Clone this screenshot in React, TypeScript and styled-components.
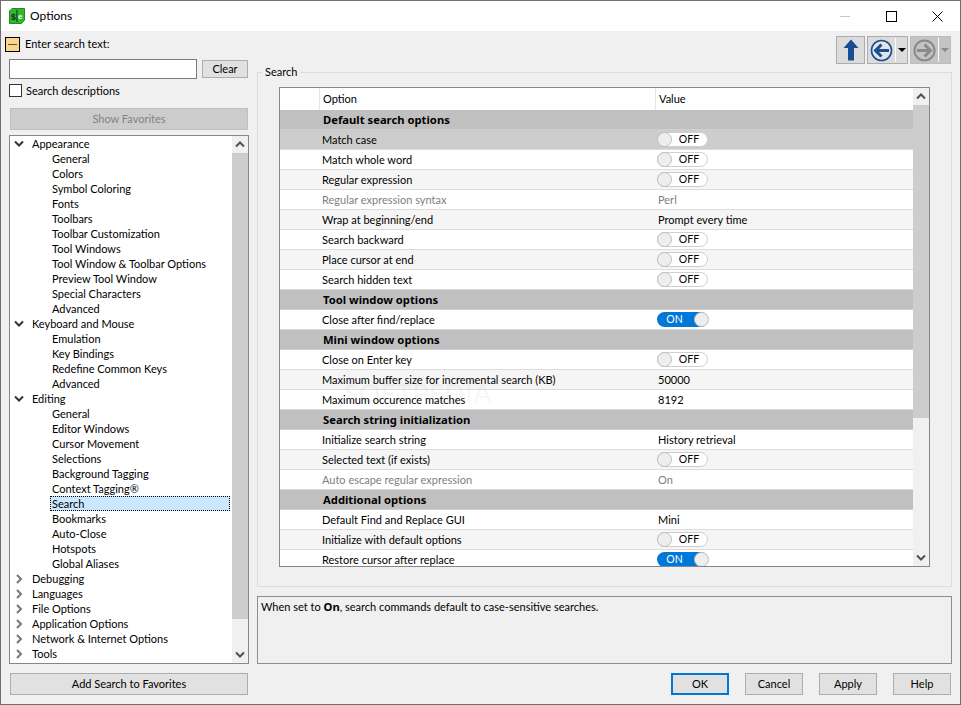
import React from "react";
import styled, { createGlobalStyle } from "styled-components";

const GlobalStyle = createGlobalStyle`
  html, body {
    margin: 0;
    padding: 0;
    background: #f0f0f0;
  }
  body {
    font-family: Lato, "Noto Sans", "Liberation Sans", sans-serif;
    font-size: 11px;
    color: #000;
  }
  b {
    font-family: "Noto Sans", sans-serif;
    font-size: 11.25px;
  }
  * {
    box-sizing: border-box;
  }
`;

const Frame = styled.div`
  width: 961px;
  height: 705px;
  display: flex;
  flex-direction: column;
  border: 1px solid #6f6f6f;
  overflow: hidden;
  background: #f0f0f0;
`;

const TitleBar = styled.div`
  height: 30px;
  flex: none;
  display: flex;
  align-items: center;
  background: #fff;
  padding-left: 8px;
`;

const TitleText = styled.span`
  margin-left: 5px;
  padding-bottom: 2px;
  font-size: 12px;
  flex: 1;
`;

const WinButton = styled.div`
  width: 46px;
  height: 30px;
  display: flex;
  align-items: center;
  justify-content: center;
`;

const Body = styled.div`
  flex: 1;
  display: flex;
  min-height: 0;
`;

const LeftPane = styled.div`
  width: 256px;
  flex: none;
  display: flex;
  flex-direction: column;
  padding: 6px 7px 9px 8px;
`;

const SearchHeading = styled.div`
  display: flex;
  align-items: flex-start;
  gap: 5px;
  height: 15px;
  line-height: 13px;
  margin-left: -4px;
`;

const CollapseBox = styled.div`
  width: 15px;
  height: 15px;
  border: 1px solid #000;
  background: #fbd58c;
  display: flex;
  align-items: center;
  justify-content: center;
  &::after {
    content: "";
    width: 9px;
    height: 1px;
    background: #555;
  }
`;

const SearchRow = styled.div`
  display: flex;
  align-items: center;
  gap: 5px;
  margin-top: 7px;
`;

const SearchInput = styled.input`
  width: 188px;
  height: 20px;
  background: #fff;
  border: 1px solid #7a7a7a;
  outline: none;
  padding: 0 3px;
`;

const Button = styled.div<{ $w?: number; $disabled?: boolean; $focus?: boolean }>`
  width: ${(p) => (p.$w ? p.$w + "px" : "100%")};
  height: 22px;
  flex: none;
  display: flex;
  align-items: center;
  justify-content: center;
  padding-bottom: 2px;
  background: ${(p) => (p.$disabled ? "#cccccc" : "#e1e1e1")};
  color: ${(p) => (p.$disabled ? "#838383" : "#000")};
  border: ${(p) => (p.$focus ? "2px solid #0078d7" : p.$disabled ? "1px solid #bfbfbf" : "1px solid #adadad")};
`;

const ClearButton = styled(Button)`
  height: 18px;
`;

const CheckRow = styled.label`
  display: flex;
  align-items: center;
  gap: 4px;
  margin-top: 5px;
  height: 13px;
`;

const CheckBox = styled.span`
  width: 13px;
  height: 13px;
  background: #fff;
  border: 1px solid #333;
`;

const FavButton = styled(Button)`
  margin: 11px 0 5px 1px;
  width: 238px;
`;

const AddButton = styled(Button)`
  margin: 9px 0 0 1px;
  width: 238px;
`;

const TreeBox = styled.div`
  width: 240px;
  height: 529px;
  flex: none;
  display: flex;
  background: #fff;
  border: 1px solid #828790;
`;

const TreeList = styled.div`
  flex: 1;
  overflow: hidden;
`;

const TreeRow = styled.div<{ $child?: boolean; $selected?: boolean }>`
  height: 15px;
  line-height: 14px;
  display: flex;
  align-items: center;
  white-space: nowrap;
  margin-left: ${(p) => (p.$child ? "40px" : "0")};
  margin-right: ${(p) => (p.$child ? "2px" : "0")};
  padding-left: ${(p) => (p.$child ? "2px" : "4px")};
  ${(p) => p.$selected && "background: #cce8ff; outline: 1px dotted #000; outline-offset: -1px;"}
`;

const Chevron = styled.svg`
  width: 10px;
  height: 10px;
  margin-right: 8px;
  flex: none;
`;

const ScrollBar = styled.div`
  width: 16px;
  flex: none;
  display: flex;
  flex-direction: column;
  background: #f0f0f0;
`;

const ScrollArrow = styled.div`
  height: 17px;
  flex: none;
  display: flex;
  align-items: center;
  justify-content: center;
`;

const ScrollThumb = styled.div<{ $h: number }>`
  height: ${(p) => p.$h}px;
  flex: none;
  background: #cdcdcd;
`;

const ScrollRest = styled.div`
  flex: 1;
`;

const RightPane = styled.div`
  flex: 1;
  min-width: 0;
  display: flex;
  flex-direction: column;
`;

const ToolRow = styled.div`
  height: 34px;
  flex: none;
  display: flex;
  justify-content: flex-end;
  align-items: flex-start;
  gap: 2px;
  padding: 5px 9px 0 0;
`;

const ToolButton = styled.div<{ $w: number; $off?: boolean; $center?: boolean }>`
  width: ${(p) => p.$w}px;
  height: 28px;
  display: flex;
  align-items: center;
  justify-content: ${(p) => (p.$center ? "center" : "flex-start")};
  background: ${(p) => (p.$off ? "#c4c4c4" : "#dcdcdc")};
  border: 1px solid ${(p) => (p.$off ? "#bdbdbd" : "#adadad")};
`;

const ToolSep = styled.span`
  width: 1px;
  height: 24px;
  background: #fff;
  margin: 0 2px 0 2px;
`;

const Caret = styled.span<{ $off?: boolean }>`
  width: 0;
  height: 0;
  border-left: 4px solid transparent;
  border-right: 4px solid transparent;
  border-top: 4px solid ${(p) => (p.$off ? "#8a8a8a" : "#000")};
`;

const Group = styled.fieldset`
  width: 695px;
  height: 522px;
  margin: 0;
  padding: 0;
  flex: none;
  border: 1px solid #dcdcdc;
`;

const GroupTitle = styled.legend`
  padding: 0 3px;
  margin-left: 4px;
  line-height: 14px;
`;

const Table = styled.div`
  position: relative;
  width: 651px;
  height: 480px;
  margin: 8px 0 0 21px;
  display: flex;
  background: #fff;
  border: 1px solid #828790;
  overflow: hidden;
`;

const TableBody = styled.div`
  flex: 1;
  min-width: 0;
`;

const HeaderRow = styled.div`
  height: 22px;
  display: grid;
  grid-template-columns: 40px 336px 1fr;
  align-items: stretch;
`;

const HeaderCell = styled.div`
  display: flex;
  align-items: center;
  padding: 0 0 1px 3px;
  border-right: 1px solid #e5e5e5;
  &:last-child {
    border-right: none;
  }
`;

const SectionRow = styled.div`
  height: 20px;
  line-height: 19px;
  padding-left: 43px;
  background: #c0c0c0;
  font-weight: 700;
  font-family: "Noto Sans", sans-serif;
  font-size: 11.25px;
  border-bottom: 1px solid #d0d0d0;
`;

const OptionRow = styled.div<{ $bg: string; $dim?: boolean }>`
  height: 20px;
  display: grid;
  grid-template-columns: 336px 1fr;
  align-items: center;
  padding-left: 42px;
  background: ${(p) => p.$bg};
  color: ${(p) => (p.$dim ? "#808080" : "#000")};
  border-bottom: 1px solid #dcdcdc;
`;

const OptionText = styled.span`
  white-space: nowrap;
`;

const ToggleTrack = styled.div<{ $on?: boolean }>`
  width: 51px;
  height: 15px;
  border-radius: 8px;
  display: flex;
  align-items: center;
  flex-direction: ${(p) => (p.$on ? "row-reverse" : "row")};
  background: ${(p) => (p.$on ? "#0078d7" : "#fff")};
  border: ${(p) => (p.$on ? "none" : "1px solid #cfcfcf")};
  color: ${(p) => (p.$on ? "#fff" : "#000")};
  font-size: 10.5px;
  margin-left: -1px;
`;

const ToggleKnob = styled.span`
  width: 15px;
  height: 15px;
  flex: none;
  border-radius: 50%;
  background: #eeeeee;
  border: 1px solid #bdbdbd;
  margin: 0 -1px;
`;

const ToggleText = styled.span<{ $on?: boolean }>`
  flex: 1;
  text-align: center;
  padding: 0 ${(p) => (p.$on ? "3px" : "0")} 2px 0;
`;

const Watermark = styled.div`
  position: absolute;
  left: 64px;
  top: 288px;
  font-size: 27px;
  font-weight: 700;
  color: rgba(0, 0, 0, 0.03);
  pointer-events: none;
`;

const DescBox = styled.div`
  width: 695px;
  height: 68px;
  flex: none;
  margin-top: 9px;
  padding: 2px 3px;
  border: 1px solid #8a8f96;
  line-height: 16px;
`;

const Footer = styled.div`
  display: flex;
  justify-content: flex-end;
  gap: 16px;
  margin-top: 9px;
  padding-right: 9px;
`;

type Item =
  | { kind: "section"; label: string }
  | { kind: "toggle"; label: string; on?: boolean; bg: string }
  | { kind: "text"; label: string; value: string; dim?: boolean; bg: string };

const W = "#ffffff";
const A = "#f5f5f5";
const S = "#cdcdcd";

const items: Item[] = [
  { kind: "section", label: "Default search options" },
  { kind: "toggle", label: "Match case", bg: S },
  { kind: "toggle", label: "Match whole word", bg: W },
  { kind: "toggle", label: "Regular expression", bg: A },
  { kind: "text", label: "Regular expression syntax", value: "Perl", dim: true, bg: W },
  { kind: "text", label: "Wrap at beginning/end", value: "Prompt every time", bg: A },
  { kind: "toggle", label: "Search backward", bg: W },
  { kind: "toggle", label: "Place cursor at end", bg: A },
  { kind: "toggle", label: "Search hidden text", bg: W },
  { kind: "section", label: "Tool window options" },
  { kind: "toggle", label: "Close after find/replace", on: true, bg: W },
  { kind: "section", label: "Mini window options" },
  { kind: "toggle", label: "Close on Enter key", bg: W },
  { kind: "text", label: "Maximum buffer size for incremental search (KB)", value: "50000", bg: A },
  { kind: "text", label: "Maximum occurence matches", value: "8192", bg: W },
  { kind: "section", label: "Search string initialization" },
  { kind: "text", label: "Initialize search string", value: "History retrieval", bg: W },
  { kind: "toggle", label: "Selected text (if exists)", bg: A },
  { kind: "text", label: "Auto escape regular expression", value: "On", dim: true, bg: W },
  { kind: "section", label: "Additional options" },
  { kind: "text", label: "Default Find and Replace GUI", value: "Mini", bg: W },
  { kind: "toggle", label: "Initialize with default options", bg: A },
  { kind: "toggle", label: "Restore cursor after replace", on: true, bg: W },
];

type Node = { label: string; open?: boolean; children?: string[] };

const tree: Node[] = [
  {
    label: "Appearance",
    open: true,
    children: [
      "General",
      "Colors",
      "Symbol Coloring",
      "Fonts",
      "Toolbars",
      "Toolbar Customization",
      "Tool Windows",
      "Tool Window & Toolbar Options",
      "Preview Tool Window",
      "Special Characters",
      "Advanced",
    ],
  },
  {
    label: "Keyboard and Mouse",
    open: true,
    children: ["Emulation", "Key Bindings", "Redefine Common Keys", "Advanced"],
  },
  {
    label: "Editing",
    open: true,
    children: [
      "General",
      "Editor Windows",
      "Cursor Movement",
      "Selections",
      "Background Tagging",
      "Context Tagging®",
      "Search",
      "Bookmarks",
      "Auto-Close",
      "Hotspots",
      "Global Aliases",
    ],
  },
  { label: "Debugging" },
  { label: "Languages" },
  { label: "File Options" },
  { label: "Application Options" },
  { label: "Network & Internet Options" },
  { label: "Tools" },
];

function ArrowGlyph({ up }: { up?: boolean }) {
  return (
    <svg width="10" height="7" viewBox="0 0 10 7">
      <path
        d={up ? "M1 5.5 L5 1.5 L9 5.5" : "M1 1.5 L5 5.5 L9 1.5"}
        fill="none"
        stroke="#505050"
        strokeWidth="2"
      />
    </svg>
  );
}

function Scroll({ thumb }: { thumb: number }) {
  return (
    <ScrollBar>
      <ScrollArrow>
        <ArrowGlyph up />
      </ScrollArrow>
      <ScrollThumb $h={thumb} />
      <ScrollRest />
      <ScrollArrow>
        <ArrowGlyph />
      </ScrollArrow>
    </ScrollBar>
  );
}

function Toggle({ on }: { on?: boolean }) {
  return (
    <ToggleTrack $on={on}>
      <ToggleKnob />
      <ToggleText $on={on}>{on ? "ON" : "OFF"}</ToggleText>
    </ToggleTrack>
  );
}

function Logo() {
  return (
    <svg width="16" height="16" viewBox="0 0 16 16">
      <path d="M3 0.5 H15.5 V12 L12.5 15.5 H0.5 V3 Z" fill="#35b535" stroke="#1f8a1f" />
      <rect x="7.4" y="2" width="1" height="12" fill="#10310f" />
      <text x="2" y="11.5" fontSize="8.5" fontWeight="700" fill="#10310f" fontFamily="Liberation Sans">
        $
      </text>
      <text x="9" y="11" fontSize="8" fontWeight="700" fill="#e8ffe8" fontFamily="Liberation Sans">
        e
      </text>
    </svg>
  );
}

function CircleArrow({ back }: { back?: boolean }) {
  const color = back ? "#1a4d94" : "#8a8a8a";
  return (
    <svg width="23" height="23" viewBox="0 0 23 23" style={{ marginLeft: 2, flex: "none" }}>
      <circle
        cx="11.5"
        cy="11.5"
        r="10"
        fill={back ? "#e4e4e4" : "#c4c4c4"}
        stroke={color}
        strokeWidth={back ? 1.6 : 2}
      />
      <path
        d={back ? "M19 11.5 H6 M11.5 5.5 L5.5 11.5 L11.5 17.5" : "M4 11.5 H17 M11.5 5.5 L17.5 11.5 L11.5 17.5"}
        fill="none"
        stroke={color}
        strokeWidth="3"
      />
    </svg>
  );
}

export default function App() {
  return (
    <>
      <GlobalStyle />
      <Frame>
        <TitleBar>
          <Logo />
          <TitleText>Options</TitleText>
          <WinButton>
            <svg width="11" height="11" viewBox="0 0 11 11">
              <rect x="0" y="5" width="10" height="1" fill="#c8c8c8" />
            </svg>
          </WinButton>
          <WinButton>
            <svg width="11" height="11" viewBox="0 0 11 11">
              <rect x="0.5" y="0.5" width="10" height="10" fill="none" stroke="#000" />
            </svg>
          </WinButton>
          <WinButton>
            <svg width="11" height="11" viewBox="0 0 11 11">
              <path d="M0.5 0.5 L10.5 10.5 M10.5 0.5 L0.5 10.5" stroke="#000" />
            </svg>
          </WinButton>
        </TitleBar>
        <Body>
          <LeftPane>
            <SearchHeading>
              <CollapseBox />
              <span>Enter search text:</span>
            </SearchHeading>
            <SearchRow>
              <SearchInput />
              <ClearButton $w={46}>Clear</ClearButton>
            </SearchRow>
            <CheckRow>
              <CheckBox />
              Search descriptions
            </CheckRow>
            <FavButton $disabled>Show Favorites</FavButton>
            <TreeBox>
              <TreeList>
                {tree.map((node) => (
                  <React.Fragment key={node.label}>
                    <TreeRow>
                      <Chevron viewBox="0 0 10 10">
                        <path
                          d={node.open ? "M1 2.5 L5 6.5 L9 2.5" : "M3 1 L7 5 L3 9"}
                          fill="none"
                          stroke={node.open ? "#333" : "#777"}
                          strokeWidth="2"
                        />
                      </Chevron>
                      {node.label}
                    </TreeRow>
                    {node.children?.map((c) => (
                      <TreeRow key={node.label + c} $child $selected={c === "Search"}>
                        {c}
                      </TreeRow>
                    ))}
                  </React.Fragment>
                ))}
              </TreeList>
              <Scroll thumb={466} />
            </TreeBox>
            <AddButton>Add Search to Favorites</AddButton>
          </LeftPane>
          <RightPane>
            <ToolRow>
              <ToolButton $w={29} $center>
                <svg width="16" height="22" viewBox="0 0 16 22">
                  <path d="M8 0.5 L15.5 9 H11 V21.5 H5 V9 H0.5 Z" fill="#1a4d94" />
                </svg>
              </ToolButton>
              <ToolButton $w={41}>
                <CircleArrow back />
                <ToolSep />
                <Caret />
              </ToolButton>
              <ToolButton $w={41} $off>
                <CircleArrow />
                <ToolSep />
                <Caret $off />
              </ToolButton>
            </ToolRow>
            <Group>
              <GroupTitle>Search</GroupTitle>
              <Table>
                <TableBody>
                  <HeaderRow>
                    <HeaderCell />
                    <HeaderCell>Option</HeaderCell>
                    <HeaderCell>Value</HeaderCell>
                  </HeaderRow>
                  {items.map((it) => {
                    if (it.kind === "section") {
                      return <SectionRow key={it.label}>{it.label}</SectionRow>;
                    }
                    if (it.kind === "toggle") {
                      return (
                        <OptionRow key={it.label} $bg={it.bg}>
                          <OptionText>{it.label}</OptionText>
                          <Toggle on={it.on} />
                        </OptionRow>
                      );
                    }
                    return (
                      <OptionRow key={it.label} $bg={it.bg} $dim={it.dim}>
                        <OptionText>{it.label}</OptionText>
                        <OptionText>{it.value}</OptionText>
                      </OptionRow>
                    );
                  })}
                </TableBody>
                <Scroll thumb={313} />
                <Watermark>SOFTPEDIA</Watermark>
              </Table>
            </Group>
            <DescBox>
              When set to <b>On</b>, search commands default to case-sensitive searches.
            </DescBox>
            <Footer>
              <Button $w={58} $focus>
                OK
              </Button>
              <Button $w={58}>Cancel</Button>
              <Button $w={58}>Apply</Button>
              <Button $w={58}>Help</Button>
            </Footer>
          </RightPane>
        </Body>
      </Frame>
    </>
  );
}
